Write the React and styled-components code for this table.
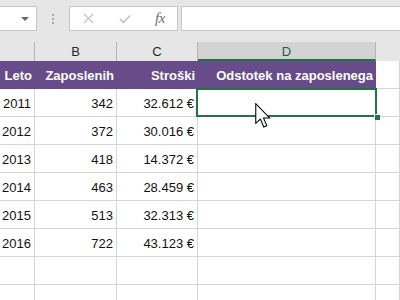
import React from 'react';
import styled, { createGlobalStyle } from 'styled-components';

const GlobalStyle = createGlobalStyle`
  html, body {
    margin: 0;
    padding: 0;
    background: #ffffff;
    overflow: hidden;
  }
  body {
    font-family: "Liberation Sans", Arial, sans-serif;
  }
`;

const Page = styled.div`
  width: 400px;
  height: 300px;
  overflow: hidden;
  background: #ffffff;
`;

const FormulaBar = styled.div`
  display: flex;
  align-items: stretch;
  height: 25px;
  padding: 6px 0 11px;
  background: #e6e6e6;
`;

const NameBox = styled.div`
  display: flex;
  align-items: center;
  justify-content: flex-end;
  width: 37px;
  box-sizing: border-box;
  padding-right: 7px;
  background: #ffffff;
  border: 1px solid #c6c6c6;
  border-left: none;
`;

const Caret = styled.span`
  width: 0;
  height: 0;
  border-left: 4px solid transparent;
  border-right: 4px solid transparent;
  border-top: 4px solid #6a6a6a;
`;

const Grip = styled.div`
  display: flex;
  flex-direction: column;
  justify-content: center;
  gap: 2px;
  width: 32px;
  align-items: center;
`;

const GripDot = styled.span`
  width: 2px;
  height: 2px;
  background: #a8a8a8;
`;

const ButtonBox = styled.div`
  display: flex;
  align-items: center;
  width: 109px;
  box-sizing: border-box;
  background: #ffffff;
  border: 1px solid #c6c6c6;
`;

const BarButton = styled.span`
  display: flex;
  align-items: center;
  justify-content: center;
  width: ${({ $w }) => $w}px;
  color: #c4c4c4;
`;

const Fx = styled.span`
  font-family: "Liberation Serif", "Times New Roman", serif;
  font-style: italic;
  font-size: 15px;
  color: #6e6e6e;
  letter-spacing: -0.5px;
`;

const FormulaInput = styled.div`
  flex: 1;
  margin-left: 3px;
  background: #ffffff;
  border: 1px solid #c6c6c6;
  border-right: none;
`;

const Sheet = styled.div`
  display: grid;
  grid-template-columns: 35px 82px 81px 178px 1fr;
`;

const ColHead = styled.div`
  height: 19px;
  box-sizing: border-box;
  display: flex;
  align-items: center;
  justify-content: center;
  font-size: 13px;
  color: ${({ $active }) => ($active ? '#1f5c3c' : '#262626')};
  background: ${({ $active }) => ($active ? '#d3d3d3' : '#e6e6e6')};
  border-right: 1px solid ${({ $plain }) => ($plain ? 'transparent' : '#b4b4b4')};
  border-bottom: ${({ $active }) => ($active ? '2px solid #217346' : 'none')};
  padding-top: ${({ $active }) => ($active ? '2px' : '0')};
`;

const HeadCell = styled.div`
  height: 28px;
  box-sizing: border-box;
  display: flex;
  align-items: center;
  justify-content: flex-end;
  padding: 1px 3px 0 0;
  background: ${({ $plain }) => ($plain ? '#ffffff' : '#674c89')};
  color: #ffffff;
  font-weight: bold;
  font-size: 13px;
  white-space: nowrap;
  overflow: hidden;
  border-right: ${({ $plain }) => ($plain ? '1px solid #d4d4d4' : 'none')};
  border-bottom: ${({ $plain }) => ($plain ? '1px solid #d4d4d4' : 'none')};
`;

const Cell = styled.div`
  position: relative;
  height: 28px;
  box-sizing: border-box;
  display: flex;
  align-items: center;
  justify-content: flex-end;
  padding: 2px 3px 0 0;
  font-size: 13px;
  color: #111111;
  white-space: nowrap;
  border-right: 1px solid #d4d4d4;
  border-bottom: 1px solid #d4d4d4;
`;

const Selection = styled.div`
  position: absolute;
  left: -2px;
  top: -1px;
  right: -2px;
  bottom: -1px;
  border: 2px solid #217346;
  pointer-events: none;
  z-index: 2;
`;

const FillHandle = styled.span`
  position: absolute;
  right: -5px;
  bottom: -5px;
  width: 5px;
  height: 5px;
  background: #217346;
  border: 1px solid #ffffff;
  border-right: none;
  border-bottom: none;
`;

const Pointer = styled.svg`
  position: absolute;
  left: 57px;
  top: 14px;
  z-index: 3;
`;

const data = [
  ['2011', '342', '32.612 €'],
  ['2012', '372', '30.016 €'],
  ['2013', '418', '14.372 €'],
  ['2014', '463', '28.459 €'],
  ['2015', '513', '32.313 €'],
  ['2016', '722', '43.123 €'],
  ['', '', ''],
  ['', '', ''],
];

const Cross = () => (
  <svg width="11" height="11" viewBox="0 0 11 11">
    <path d="M1 1 L10 10 M10 1 L1 10" stroke="currentColor" strokeWidth="1.3" fill="none" />
  </svg>
);

const Check = () => (
  <svg width="12" height="10" viewBox="0 0 12 10">
    <path d="M1 5 L4.5 8.5 L11 1.5" stroke="currentColor" strokeWidth="1.6" fill="none" />
  </svg>
);

const Arrow = () => (
  <Pointer width="16" height="25" viewBox="0 0 12 19">
    <path
      d="M0.5 0.5 L0.5 15.5 L4 12.2 L6.6 18.2 L8.9 17.2 L6.4 11.4 L11 11.4 Z"
      fill="#ffffff"
      stroke="#000000"
      strokeWidth="0.8"
      strokeLinejoin="miter"
    />
  </Pointer>
);

export default function App() {
  return (
    <Page>
      <GlobalStyle />
      <FormulaBar>
        <NameBox>
          <Caret />
        </NameBox>
        <Grip>
          <GripDot />
          <GripDot />
          <GripDot />
        </Grip>
        <ButtonBox>
          <BarButton $w={37}>
            <Cross />
          </BarButton>
          <BarButton $w={36}>
            <Check />
          </BarButton>
          <BarButton $w={34}>
            <Fx>fx</Fx>
          </BarButton>
        </ButtonBox>
        <FormulaInput />
      </FormulaBar>

      <Sheet>
        <ColHead />
        <ColHead>B</ColHead>
        <ColHead>C</ColHead>
        <ColHead $active>D</ColHead>
        <ColHead $plain />

        <HeadCell>Leto</HeadCell>
        <HeadCell>Zaposlenih</HeadCell>
        <HeadCell>Stroški</HeadCell>
        <HeadCell>Odstotek na zaposlenega</HeadCell>
        <HeadCell $plain />

        {data.map((row, i) => (
          <React.Fragment key={i}>
            <Cell>{row[0]}</Cell>
            <Cell>{row[1]}</Cell>
            <Cell>{row[2]}</Cell>
            <Cell>
              {i === 0 && (
                <>
                  <Selection>
                    <FillHandle />
                  </Selection>
                  <Arrow />
                </>
              )}
            </Cell>
            <Cell />
          </React.Fragment>
        ))}
      </Sheet>
    </Page>
  );
}
